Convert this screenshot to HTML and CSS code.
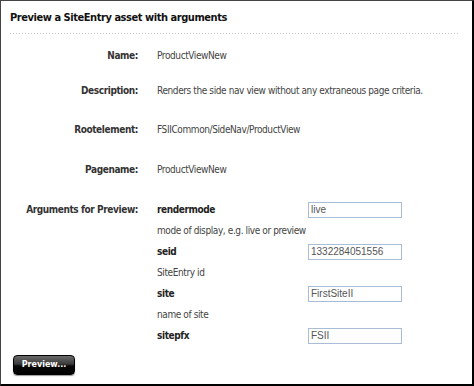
FILE: index.html
```html
<!DOCTYPE html>
<html>
<head>
<meta charset="utf-8">
<link rel="stylesheet" href="styles.css">
</head>
<body>
<div class="frame">
  <h1 class="title">Preview a SiteEntry asset with arguments</h1>
  <div class="rule"></div>
  <div class="form">
    <div class="row r1"><div class="label">Name:</div><div class="value">ProductViewNew</div></div>
    <div class="row r2"><div class="label">Description:</div><div class="value">Renders the side nav view without any extraneous page criteria.</div></div>
    <div class="row r3"><div class="label">Rootelement:</div><div class="value">FSIICommon/SideNav/ProductView</div></div>
    <div class="row r3"><div class="label">Pagename:</div><div class="value">ProductViewNew</div></div>
    <div class="row args">
      <div class="label">Arguments for Preview:</div>
      <div class="arglist">
        <div class="arg"><span class="argname">rendermode</span><input class="field" type="text" value="live"></div>
        <div class="argdesc">mode of display, e.g. live or preview</div>
        <div class="arg"><span class="argname">seid</span><input class="field" type="text" value="1332284051556"></div>
        <div class="argdesc">SiteEntry id</div>
        <div class="arg"><span class="argname">site</span><input class="field" type="text" value="FirstSiteII"></div>
        <div class="argdesc">name of site</div>
        <div class="arg"><span class="argname">sitepfx</span><input class="field" type="text" value="FSII"></div>
      </div>
    </div>
  </div>
  <div class="actions"><button class="btn" type="button">Preview...</button></div>
</div>
</body>
</html>
```

FILE: styles.css
```css
html, body {
  margin: 0;
  padding: 0;
  background: #fff;
}
body {
  font-family: "DejaVu Sans Condensed", "DejaVu Sans", sans-serif;
  color: #333;
}
.frame {
  box-sizing: border-box;
  width: 474px;
  height: 386px;
  border-left: 1px solid #444;
  border-top: 1px solid #444;
  border-right: 2px solid #000;
  border-bottom: 2px solid #000;
  padding: 0 10px 0 9px;
  position: relative;
}
.title {
  margin: 0;
  padding-top: 9px;
  font-size: 11px;
  font-weight: bold;
  color: #111;
  line-height: 15px;
  letter-spacing: -0.45px;
}
.rule {
  margin-top: 8px;
  height: 1px;
  width: 450px;
  background: repeating-linear-gradient(to right, #c4c4c4 0, #c4c4c4 1px, transparent 1px, transparent 3px);
}
.form {
  display: flex;
  flex-direction: column;
  padding-top: 15px;
}
.row {
  display: flex;
  font-size: 10px;
  line-height: 13px;
  letter-spacing: -0.4px;
}
.r1 { height: 35px; }
.r2 { height: 39px; }
.r3 { height: 40px; }
.label {
  width: 128px;
  flex: none;
  text-align: right;
  font-weight: bold;
  color: #333;
}
.value {
  margin-left: 19px;
  color: #444;
}
.args { height: auto; }
.arglist {
  margin-left: 19px;
  display: flex;
  flex-direction: column;
  margin-top: -4px;
}
.arg {
  display: flex;
  align-items: center;
  height: 21px;
}
.argname {
  width: 151px;
  font-weight: bold;
  color: #222;
}
.argdesc {
  height: 21px;
  display: flex;
  align-items: center;
  color: #444;
}
.field {
  box-sizing: border-box;
  width: 94px;
  height: 16px;
  border: 1px solid #a9bdd6;
  padding: 0 2px;
  font-family: "Liberation Sans", sans-serif;
  font-size: 10px;
  letter-spacing: 0;
  color: #555;
  margin: 0;
}
.actions {
  position: absolute;
  left: 12px;
  top: 351px;
}
.btn {
  width: 62px;
  height: 20px;
  border: 1px solid #000;
  border-radius: 4px;
  background: linear-gradient(#6a6a6a 0%, #3a3a3a 45%, #0a0a0a 55%, #000 100%);
  color: #fff;
  font-family: "DejaVu Sans", sans-serif;
  font-weight: bold;
  font-size: 8px;
  padding: 0;
  box-shadow: 0 1px 1px #999;
}
```
